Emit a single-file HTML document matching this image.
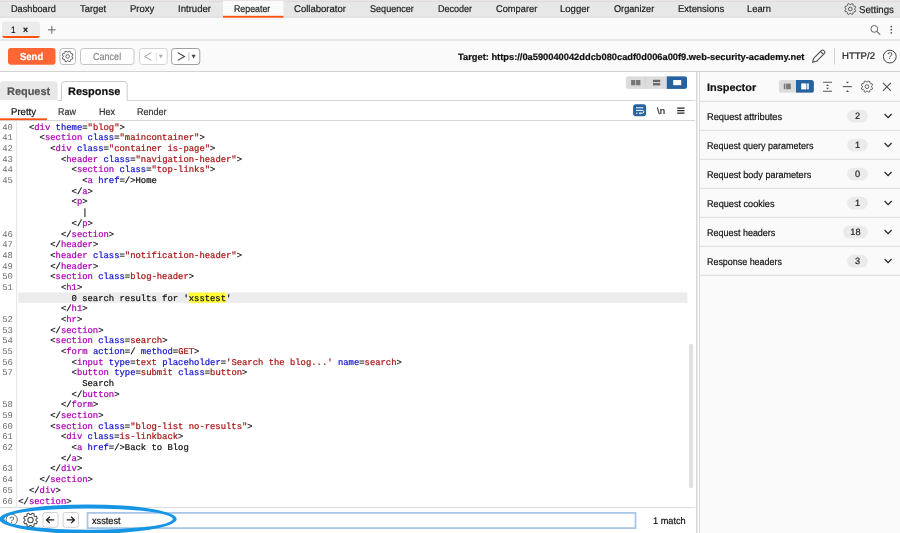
<!DOCTYPE html>
<html lang="en"><head><meta charset="utf-8"><title>Burp Suite Repeater</title>
<style>
html,body{margin:0;padding:0}
body{width:900px;height:533px;position:relative;overflow:hidden;background:#fafafa;font-family:"Liberation Sans",Arial,sans-serif;color:#1a1a1a;font-size:9.6px}
.abs{position:absolute}
svg{position:absolute;left:0;top:0;overflow:hidden}
.lb{-webkit-text-stroke:0.2px;position:absolute;line-height:1;white-space:nowrap;transform-origin:0 50%}
#fg{position:absolute;left:0;top:0;width:900px;height:533px;will-change:transform;text-rendering:geometricPrecision}
.row{position:absolute;left:0;width:688px;height:10.68px;line-height:10.68px;font-family:"Liberation Mono","DejaVu Sans Mono",monospace;font-size:8.88px;white-space:pre;color:#111;-webkit-text-stroke:0.22px}
.num{position:absolute;left:2.2px;top:0;color:#6e6e6e;-webkit-text-stroke:0}
.src{position:absolute;left:18.3px;top:0;height:10.68px}
.t{color:#ae00b2} .a{color:#1414cc} .v{color:#a61616} .x{color:#111}
.hl{color:#111}
.bd{position:absolute;width:30px;text-align:center;line-height:12.8px;height:12.8px;font-size:9.2px;color:#222;-webkit-text-stroke:0.2px}
.qm{position:absolute;width:14px;text-align:center;line-height:1;color:#444}
</style></head><body>
<div id="fg">
<svg width="900" height="533" viewBox="0 0 900 533">
<rect x="0.00" y="0.00" width="900.00" height="533.00" fill="#fafafa"/>
<rect x="0.00" y="0.00" width="900.00" height="17.50" fill="#e7e7e7"/>
<rect x="0.00" y="0.00" width="900.00" height="0.90" fill="#ece6e4"/>
<rect x="0.00" y="0.90" width="900.00" height="0.90" fill="#dadada"/>
<rect x="0.00" y="16.60" width="900.00" height="1.00" fill="#d8dcdc"/>
<rect x="223.00" y="1.00" width="60.50" height="16.80" fill="#fbfbfb"/>
<rect x="223.00" y="15.80" width="60.50" height="1.90" fill="#ff5210"/>
<g transform="translate(850.30 9.00) scale(0.9333)"><path d="M4.76 0.64 L5.83 1.40 L5.12 3.13 L3.82 2.91 L2.91 3.82 L3.13 5.12 L1.40 5.83 L0.64 4.76 L-0.64 4.76 L-1.40 5.83 L-3.13 5.12 L-2.91 3.82 L-3.82 2.91 L-5.12 3.13 L-5.83 1.40 L-4.76 0.64 L-4.76 -0.64 L-5.83 -1.40 L-5.12 -3.13 L-3.82 -2.91 L-2.91 -3.82 L-3.13 -5.12 L-1.40 -5.83 L-0.64 -4.76 L0.64 -4.76 L1.40 -5.83 L3.13 -5.12 L2.91 -3.82 L3.82 -2.91 L5.12 -3.13 L5.83 -1.40 L4.76 -0.64Z" fill="none" stroke="#555" stroke-width="1.02" stroke-linejoin="round"/><circle r="2.0" fill="none" stroke="#555" stroke-width="1.02"/></g>
<clipPath id="c1"><rect x="2" y="21.3" width="38" height="16.7" rx="3"/></clipPath>
<g clip-path="url(#c1)"><rect x="2" y="21.3" width="38" height="16.7" fill="#ebebeb"/><rect x="2" y="36" width="38" height="2" fill="#ff5210"/></g>
<path d="M51.85 26V33.7M48 29.85H55.7" fill="none" stroke="#666" stroke-width="1.0"/>
<circle cx="874.3" cy="28.9" r="3.4" fill="none" stroke="#666" stroke-width="1"/>
<path d="M876.7 31.4L880.2 34.7" fill="none" stroke="#666" stroke-width="1.1"/>
<circle cx="891.3" cy="26.6" r="0.9" fill="#555"/>
<circle cx="891.3" cy="29.7" r="0.9" fill="#555"/>
<circle cx="891.3" cy="32.8" r="0.9" fill="#555"/>
<rect x="0.00" y="39.10" width="900.00" height="1.80" fill="#e2e5e5"/>
<rect x="8.00" y="48.00" width="47.50" height="16.70" rx="3" fill="#ff6633"/>
<rect x="60.00" y="48.50" width="15.50" height="16.00" rx="2.8" fill="#fff" stroke="#bdbdbd" stroke-width="1"/>
<g transform="translate(67.60 56.40) scale(0.9167)"><path d="M4.76 0.64 L5.83 1.40 L5.12 3.13 L3.82 2.91 L2.91 3.82 L3.13 5.12 L1.40 5.83 L0.64 4.76 L-0.64 4.76 L-1.40 5.83 L-3.13 5.12 L-2.91 3.82 L-3.82 2.91 L-5.12 3.13 L-5.83 1.40 L-4.76 0.64 L-4.76 -0.64 L-5.83 -1.40 L-5.12 -3.13 L-3.82 -2.91 L-2.91 -3.82 L-3.13 -5.12 L-1.40 -5.83 L-0.64 -4.76 L0.64 -4.76 L1.40 -5.83 L3.13 -5.12 L2.91 -3.82 L3.82 -2.91 L5.12 -3.13 L5.83 -1.40 L4.76 -0.64Z" fill="none" stroke="#555" stroke-width="0.98" stroke-linejoin="round"/><circle r="2.0" fill="none" stroke="#555" stroke-width="0.98"/></g>
<rect x="80.50" y="48.50" width="53.50" height="16.00" rx="2.8" fill="#fff" stroke="#c6c6c6" stroke-width="1"/>
<rect x="139.50" y="48.50" width="27.70" height="16.00" rx="2.8" fill="#fff" stroke="#d4d4d4" stroke-width="1"/>
<path d="M12.3 4.6 L5.6 8.5 L12.3 12.4" fill="none" stroke="#9a9a9a" stroke-width="0.95" transform="translate(139.00 48.00)"/>
<path d="M17.3 4.3V12.8" fill="none" stroke="#d0d0d0" stroke-width="0.7" transform="translate(139.00 48.00)"/>
<path d="M19.8 6.8 H23.8 L21.8 10.3Z" fill="#aaa" transform="translate(139.00 48.00)"/>
<rect x="171.60" y="48.50" width="28.20" height="16.00" rx="2.8" fill="#fff" stroke="#a0a0a0" stroke-width="1"/>
<path d="M6.4 4.6 L13.2 8.5 L6.4 12.4" fill="none" stroke="#3a3a3a" stroke-width="1.05" transform="translate(171.30 48.00)"/>
<path d="M17.6 4.3V12.8" fill="none" stroke="#999" stroke-width="0.7" transform="translate(171.30 48.00)"/>
<path d="M20.2 6.8 H24.4 L22.3 10.4Z" fill="#444" transform="translate(171.30 48.00)"/>
<path d="M1.6 14.3 L2.6 10.4 L10.6 2.4 Q11.6 1.4 12.6 2.4 L13.5 3.3 Q14.5 4.3 13.5 5.3 L5.5 13.3 Z M9.6 3.6 L12.4 6.4" fill="none" stroke="#4a4a4a" stroke-width="1.05" transform="translate(811.00 48.00)" stroke-linejoin="round"/>
<rect x="834.00" y="48.00" width="1.00" height="16.50" fill="#d0d0d0"/>
<circle cx="889.8" cy="56.6" r="6.4" fill="none" stroke="#444" stroke-width="1"/>
<rect x="0.00" y="71.00" width="900.00" height="1.00" fill="#d5d2d0"/>
<rect x="0.00" y="72.00" width="696.00" height="461.00" fill="#fff"/>
<path d="M0 100V84.3Q0 81.3 3 81.3H54.6Q57.6 81.3 57.6 84.3V100Z" fill="#e8e8e8"/>
<rect x="57.60" y="100.00" width="637.40" height="1.00" fill="#d6d3d1"/>
<path d="M61.5 100.5V84.5Q61.5 81.5 64.5 81.5H124.2Q127.2 81.5 127.2 84.5V100.5" fill="#fff" stroke="#cdcbca" stroke-width="1"/>
<rect x="62.00" y="99.50" width="64.70" height="2.00" fill="#fff"/>
<clipPath id="c2"><rect x="625.8" y="76.2" width="61.3" height="12.7" rx="2.6"/></clipPath>
<g clip-path="url(#c2)"><rect x="625.8" y="76.2" width="61.3" height="12.7" fill="#dcdcdc"/><rect x="645" y="76.2" width="0.7" height="12.7" fill="#cfcfcf"/><rect x="666.8" y="76.2" width="20.4" height="12.7" fill="#25629f"/></g>
<rect x="631.10" y="80.00" width="4.30" height="5.30" fill="#777"/>
<rect x="636.10" y="80.00" width="4.30" height="5.30" fill="#777"/>
<rect x="653.00" y="79.80" width="7.20" height="2.30" fill="#666"/>
<rect x="653.00" y="83.10" width="7.20" height="2.30" fill="#666"/>
<rect x="673.20" y="80.00" width="8.00" height="5.20" fill="#fff"/>
<rect x="0.00" y="120.00" width="695.00" height="1.00" fill="#d9d7d6"/>
<rect x="0.00" y="118.30" width="47.00" height="1.80" fill="#ff5210"/>
<rect x="633.10" y="104.20" width="13.00" height="12.10" rx="2.7" fill="#27649f"/>
<path d="M3 3.6H10.3M3 6.2H9.2Q10.8 6.2 10.8 7.6Q10.8 9 9.2 9H6.8M3 9H4.6" fill="none" stroke="#fff" stroke-width="1" transform="translate(633.00 104.20)"/>
<path d="M7.4 7.6 L5.8 9 L7.4 10.4Z" fill="#fff" transform="translate(633.00 104.20)"/>
<path d="M0.2 1.1H7.5M0.2 3.6H7.5M0.2 6.1H7.5" fill="none" stroke="#222" stroke-width="1.1" transform="translate(677.00 107.00)"/>
<rect x="16.20" y="121.00" width="1.00" height="386.00" fill="#e4e4e4"/>
<rect x="18.30" y="292.50" width="669.00" height="10.30" fill="#ececec"/>
<rect x="188.80" y="292.50" width="37.40" height="10.30" fill="#ffff38"/>
<rect x="689.00" y="343.70" width="4.20" height="144.70" rx="2.1" fill="#e1e1e1"/>
<rect x="0.00" y="507.00" width="695.00" height="1.00" fill="#dcdcdc"/>
<circle cx="11.7" cy="519.7" r="5.6" fill="none" stroke="#555" stroke-width="0.9"/>
<g transform="translate(30.50 520.00) scale(1.1667)"><path d="M4.76 0.64 L5.83 1.40 L5.12 3.13 L3.82 2.91 L2.91 3.82 L3.13 5.12 L1.40 5.83 L0.64 4.76 L-0.64 4.76 L-1.40 5.83 L-3.13 5.12 L-2.91 3.82 L-3.82 2.91 L-5.12 3.13 L-5.83 1.40 L-4.76 0.64 L-4.76 -0.64 L-5.83 -1.40 L-5.12 -3.13 L-3.82 -2.91 L-2.91 -3.82 L-3.13 -5.12 L-1.40 -5.83 L-0.64 -4.76 L0.64 -4.76 L1.40 -5.83 L3.13 -5.12 L2.91 -3.82 L3.82 -2.91 L5.12 -3.13 L5.83 -1.40 L4.76 -0.64Z" fill="none" stroke="#4a4a4a" stroke-width="0.90" stroke-linejoin="round"/><circle r="2.3" fill="none" stroke="#4a4a4a" stroke-width="0.90"/></g>
<rect x="43.00" y="512.50" width="15.10" height="14.80" rx="2.4" fill="#fff" stroke="#d6d0ce" stroke-width="1"/>
<path d="M11.7 7.9H4.1M7.3 4.7 L4 7.9 L7.3 11.1" fill="none" stroke="#1a1a1a" stroke-width="1.25" transform="translate(42.50 512.00)"/>
<rect x="63.10" y="512.50" width="15.30" height="14.80" rx="2.4" fill="#fff" stroke="#d6d0ce" stroke-width="1"/>
<path d="M4.1 7.9H11.7M8.5 4.7 L11.8 7.9 L8.5 11.1" fill="none" stroke="#1a1a1a" stroke-width="1.25" transform="translate(62.60 512.00)"/>
<rect x="87.50" y="512.90" width="548.00" height="15.20" fill="#fff" stroke="#aac5e8" stroke-width="1.8"/>
<rect x="696.00" y="72.00" width="4.00" height="461.00" fill="#fcfcfc"/>
<rect x="696.10" y="72.00" width="1.20" height="461.00" fill="#d6d1d0"/>
<rect x="699.10" y="72.00" width="0.90" height="461.00" fill="#d9d5d4"/>
<rect x="700.00" y="72.00" width="200.00" height="461.00" fill="#fafafa"/>
<clipPath id="c3"><rect x="778.8" y="80" width="35" height="12.8" rx="2.6"/></clipPath>
<g clip-path="url(#c3)"><rect x="778.8" y="80" width="35" height="12.8" fill="#dcdcdc"/><rect x="796" y="80" width="18" height="12.8" fill="#25629f"/></g>
<rect x="783.80" y="83.60" width="1.60" height="5.60" fill="#7a7a7a"/>
<rect x="786.10" y="83.60" width="4.70" height="5.60" fill="#7a7a7a"/>
<rect x="801.20" y="83.40" width="5.20" height="6.00" fill="#fff"/>
<rect x="807.20" y="83.40" width="1.60" height="6.00" fill="#fff"/>
<path d="M1 2.3H10M1 11.3H10" fill="none" stroke="#555" stroke-width="1.05" transform="translate(822.00 80.00)"/>
<path d="M4 5.9H7L5.5 4.2Z M4 7.8H7L5.5 9.5Z" fill="#555" transform="translate(822.00 80.00)"/>
<path d="M0.8 6.6H9.9" fill="none" stroke="#555" stroke-width="1.1" transform="translate(842.00 80.00)"/>
<path d="M4 1.8H7L5.5 3.6Z M4 11.9H7L5.5 10.1Z" fill="#555" transform="translate(842.00 80.00)"/>
<g transform="translate(867.00 86.60) scale(0.9667)"><path d="M4.76 0.64 L5.83 1.40 L5.12 3.13 L3.82 2.91 L2.91 3.82 L3.13 5.12 L1.40 5.83 L0.64 4.76 L-0.64 4.76 L-1.40 5.83 L-3.13 5.12 L-2.91 3.82 L-3.82 2.91 L-5.12 3.13 L-5.83 1.40 L-4.76 0.64 L-4.76 -0.64 L-5.83 -1.40 L-5.12 -3.13 L-3.82 -2.91 L-2.91 -3.82 L-3.13 -5.12 L-1.40 -5.83 L-0.64 -4.76 L0.64 -4.76 L1.40 -5.83 L3.13 -5.12 L2.91 -3.82 L3.82 -2.91 L5.12 -3.13 L5.83 -1.40 L4.76 -0.64Z" fill="none" stroke="#555" stroke-width="0.93" stroke-linejoin="round"/><circle r="2.0" fill="none" stroke="#555" stroke-width="0.93"/></g>
<path d="M0.9 0.8 L8.9 8.9 M8.9 0.8 L0.9 8.9" fill="none" stroke="#555" stroke-width="1.15" transform="translate(882.00 82.00)"/>
<rect x="700.00" y="100.80" width="200.00" height="1.00" fill="#dcdad9"/>
<rect x="700.00" y="129.80" width="200.00" height="1.00" fill="#dedcdb"/>
<rect x="847.20" y="109.70" width="20.60" height="12.80" rx="6.4" fill="#ebebeb"/>
<path d="M1 1.3 L4.5 5 L8 1.3" fill="none" stroke="#222" stroke-width="1.15" transform="translate(883.60 112.70)"/>
<rect x="700.00" y="158.80" width="200.00" height="1.00" fill="#dedcdb"/>
<rect x="847.20" y="138.70" width="20.60" height="12.80" rx="6.4" fill="#ebebeb"/>
<path d="M1 1.3 L4.5 5 L8 1.3" fill="none" stroke="#222" stroke-width="1.15" transform="translate(883.60 141.70)"/>
<rect x="700.00" y="187.80" width="200.00" height="1.00" fill="#dedcdb"/>
<rect x="847.20" y="167.70" width="20.60" height="12.80" rx="6.4" fill="#ebebeb"/>
<path d="M1 1.3 L4.5 5 L8 1.3" fill="none" stroke="#222" stroke-width="1.15" transform="translate(883.60 170.70)"/>
<rect x="700.00" y="216.80" width="200.00" height="1.00" fill="#dedcdb"/>
<rect x="847.20" y="196.70" width="20.60" height="12.80" rx="6.4" fill="#ebebeb"/>
<path d="M1 1.3 L4.5 5 L8 1.3" fill="none" stroke="#222" stroke-width="1.15" transform="translate(883.60 199.70)"/>
<rect x="700.00" y="245.80" width="200.00" height="1.00" fill="#dedcdb"/>
<rect x="843.00" y="225.70" width="24.80" height="12.80" rx="6.4" fill="#ebebeb"/>
<path d="M1 1.3 L4.5 5 L8 1.3" fill="none" stroke="#222" stroke-width="1.15" transform="translate(883.60 228.70)"/>
<rect x="700.00" y="274.80" width="200.00" height="1.00" fill="#dedcdb"/>
<rect x="847.20" y="254.70" width="20.60" height="12.80" rx="6.4" fill="#ebebeb"/>
<path d="M1 1.3 L4.5 5 L8 1.3" fill="none" stroke="#222" stroke-width="1.15" transform="translate(883.60 257.70)"/>
</svg>

<span class="lb" id="tab0" style="left:10.80px;top:4.70px;font-size:9.8px;color:#1c1c1c;transform:scaleX(0.9355);">Dashboard</span>
<span class="lb" id="tab1" style="left:79.76px;top:4.70px;font-size:9.8px;color:#1c1c1c;transform:scaleX(0.9630);">Target</span>
<span class="lb" id="tab2" style="left:129.77px;top:4.70px;font-size:9.8px;color:#1c1c1c;transform:scaleX(0.9691);">Proxy</span>
<span class="lb" id="tab3" style="left:177.52px;top:4.70px;font-size:9.8px;color:#1c1c1c;transform:scaleX(0.9771);">Intruder</span>
<span class="lb" id="tab4" style="left:234.33px;top:4.70px;font-size:9.8px;color:#1c1c1c;transform:scaleX(0.8987);">Repeater</span>
<span class="lb" id="tab5" style="left:293.81px;top:4.70px;font-size:9.8px;color:#1c1c1c;transform:scaleX(0.9744);">Collaborator</span>
<span class="lb" id="tab6" style="left:370.24px;top:4.70px;font-size:9.8px;color:#1c1c1c;transform:scaleX(0.9262);">Sequencer</span>
<span class="lb" id="tab7" style="left:437.61px;top:4.70px;font-size:9.8px;color:#1c1c1c;transform:scaleX(0.9214);">Decoder</span>
<span class="lb" id="tab8" style="left:495.53px;top:4.70px;font-size:9.8px;color:#1c1c1c;transform:scaleX(0.9465);">Comparer</span>
<span class="lb" id="tab9" style="left:560.27px;top:4.70px;font-size:9.8px;color:#1c1c1c;transform:scaleX(0.9748);">Logger</span>
<span class="lb" id="tab10" style="left:613.83px;top:4.70px;font-size:9.8px;color:#1c1c1c;transform:scaleX(0.9341);">Organizer</span>
<span class="lb" id="tab11" style="left:677.58px;top:4.70px;font-size:9.8px;color:#1c1c1c;transform:scaleX(0.9626);">Extensions</span>
<span class="lb" id="tab12" style="left:746.58px;top:4.70px;font-size:9.8px;color:#1c1c1c;transform:scaleX(0.9558);">Learn</span>
<span class="lb" id="settings" style="left:859.22px;top:5.94px;font-size:10.0px;color:#1c1c1c;transform:scaleX(0.9645);">Settings</span>
<span class="lb" id="one" style="left:11.34px;top:25.83px;font-size:9.3px;color:#111;transform:scaleX(0.8750);">1</span>
<span class="lb" id="xclose" style="left:23.36px;top:26.47px;font-size:9.6px;color:#111;font-weight:bold;transform:scaleX(0.8842);">×</span>
<span class="lb" id="sendt" style="left:20.27px;top:53.15px;font-size:10.1px;color:#fff;font-weight:bold;transform:scaleX(0.9389);">Send</span>
<span class="lb" id="cancel" style="left:93.25px;top:53.15px;font-size:10.1px;color:#8a8a8a;transform:scaleX(0.8959);">Cancel</span>
<span class="lb" id="tgt" style="left:457.50px;top:53.07px;font-size:9.25px;color:#111;font-weight:bold;transform:scaleX(1.0052);">Target: https://0a590040042ddcb080cadf0d006a00f9.web-security-academy.net</span>
<span class="lb" id="http2" style="left:841.75px;top:52.17px;font-size:9.6px;color:#1c1c1c;transform:scaleX(0.9984);">HTTP/2</span>
<span class="qm" style="left:882.8px;top:52.2px;font-size:9.6px">?</span>
<span class="lb" id="req" style="left:7.06px;top:86.69px;font-size:11px;color:#555;font-weight:bold;transform:scaleX(0.9929);">Request</span>
<span class="lb" id="res" style="left:67.95px;top:86.69px;font-size:11px;color:#111;font-weight:bold;transform:scaleX(0.9961);">Response</span>
<span class="lb" id="pretty" style="left:10.57px;top:107.70px;font-size:9.8px;color:#111;transform:scaleX(0.9778);">Pretty</span>
<span class="lb" id="raw" style="left:58.02px;top:107.70px;font-size:9.8px;color:#333;transform:scaleX(0.9120);">Raw</span>
<span class="lb" id="hex" style="left:98.81px;top:107.70px;font-size:9.8px;color:#333;transform:scaleX(0.9212);">Hex</span>
<span class="lb" id="render" style="left:137.31px;top:107.70px;font-size:9.8px;color:#333;transform:scaleX(0.9184);">Render</span>
<span class="lb" id="nl" style="left:656.80px;top:106.97px;font-size:8.9px;color:#222;transform:scaleX(1.0815);">\n</span>

<div class="row" style="top:122.70px"><span class="num">40</span><span class="src">  &lt;<span class="t">div</span> <span class="a">theme</span>=<span class="v">"blog"</span>&gt;</span></div>
<div class="row" style="top:133.38px"><span class="num">41</span><span class="src">    &lt;<span class="t">section</span> <span class="a">class</span>=<span class="v">"maincontainer"</span>&gt;</span></div>
<div class="row" style="top:144.06px"><span class="num">42</span><span class="src">      &lt;<span class="t">div</span> <span class="a">class</span>=<span class="v">"container is-page"</span>&gt;</span></div>
<div class="row" style="top:154.74px"><span class="num">43</span><span class="src">        &lt;<span class="t">header</span> <span class="a">class</span>=<span class="v">"navigation-header"</span>&gt;</span></div>
<div class="row" style="top:165.42px"><span class="num">44</span><span class="src">          &lt;<span class="t">section</span> <span class="a">class</span>=<span class="v">"top-links"</span>&gt;</span></div>
<div class="row" style="top:176.10px"><span class="num">45</span><span class="src">            &lt;<span class="t">a</span> <span class="a">href</span>=/&gt;<span class="x">Home</span></span></div>
<div class="row" style="top:186.78px"><span class="num"></span><span class="src">          &lt;/<span class="t">a</span>&gt;</span></div>
<div class="row" style="top:197.46px"><span class="num"></span><span class="src">          &lt;<span class="t">p</span>&gt;</span></div>
<div class="row" style="top:208.14px"><span class="num"></span><span class="src">            <span class="x">|</span></span></div>
<div class="row" style="top:218.82px"><span class="num"></span><span class="src">          &lt;/<span class="t">p</span>&gt;</span></div>
<div class="row" style="top:229.50px"><span class="num">46</span><span class="src">        &lt;/<span class="t">section</span>&gt;</span></div>
<div class="row" style="top:240.18px"><span class="num">47</span><span class="src">      &lt;/<span class="t">header</span>&gt;</span></div>
<div class="row" style="top:250.86px"><span class="num">48</span><span class="src">      &lt;<span class="t">header</span> <span class="a">class</span>=<span class="v">"notification-header"</span>&gt;</span></div>
<div class="row" style="top:261.54px"><span class="num">49</span><span class="src">      &lt;/<span class="t">header</span>&gt;</span></div>
<div class="row" style="top:272.22px"><span class="num">50</span><span class="src">      &lt;<span class="t">section</span> <span class="a">class</span>=<span class="v">blog-header</span>&gt;</span></div>
<div class="row" style="top:282.90px"><span class="num">51</span><span class="src">        &lt;<span class="t">h1</span>&gt;</span></div>
<div class="row" style="top:293.58px"><span class="num"></span><span class="src">          <span class="x">0 search results for '</span><span class="hl">xsstest</span><span class="x">'</span></span></div>
<div class="row" style="top:304.26px"><span class="num"></span><span class="src">        &lt;/<span class="t">h1</span>&gt;</span></div>
<div class="row" style="top:314.94px"><span class="num">52</span><span class="src">        &lt;<span class="t">hr</span>&gt;</span></div>
<div class="row" style="top:325.62px"><span class="num">53</span><span class="src">      &lt;/<span class="t">section</span>&gt;</span></div>
<div class="row" style="top:336.30px"><span class="num">54</span><span class="src">      &lt;<span class="t">section</span> <span class="a">class</span>=<span class="v">search</span>&gt;</span></div>
<div class="row" style="top:346.98px"><span class="num">55</span><span class="src">        &lt;<span class="t">form</span> <span class="a">action</span>=/ <span class="a">method</span>=<span class="v">GET</span>&gt;</span></div>
<div class="row" style="top:357.66px"><span class="num">56</span><span class="src">          &lt;<span class="t">input</span> <span class="a">type</span>=<span class="v">text</span> <span class="a">placeholder</span>=<span class="v">'Search the blog...'</span> <span class="a">name</span>=<span class="v">search</span>&gt;</span></div>
<div class="row" style="top:368.34px"><span class="num">57</span><span class="src">          &lt;<span class="t">button</span> <span class="a">type</span>=<span class="v">submit</span> <span class="a">class</span>=<span class="v">button</span>&gt;</span></div>
<div class="row" style="top:379.02px"><span class="num"></span><span class="src">            <span class="x">Search</span></span></div>
<div class="row" style="top:389.70px"><span class="num"></span><span class="src">          &lt;/<span class="t">button</span>&gt;</span></div>
<div class="row" style="top:400.38px"><span class="num">58</span><span class="src">        &lt;/<span class="t">form</span>&gt;</span></div>
<div class="row" style="top:411.06px"><span class="num">59</span><span class="src">      &lt;/<span class="t">section</span>&gt;</span></div>
<div class="row" style="top:421.74px"><span class="num">60</span><span class="src">      &lt;<span class="t">section</span> <span class="a">class</span>=<span class="v">"blog-list no-results"</span>&gt;</span></div>
<div class="row" style="top:432.42px"><span class="num">61</span><span class="src">        &lt;<span class="t">div</span> <span class="a">class</span>=<span class="v">is-linkback</span>&gt;</span></div>
<div class="row" style="top:443.10px"><span class="num">62</span><span class="src">          &lt;<span class="t">a</span> <span class="a">href</span>=/&gt;<span class="x">Back to Blog</span></span></div>
<div class="row" style="top:453.78px"><span class="num"></span><span class="src">        &lt;/<span class="t">a</span>&gt;</span></div>
<div class="row" style="top:464.46px"><span class="num">63</span><span class="src">      &lt;/<span class="t">div</span>&gt;</span></div>
<div class="row" style="top:475.14px"><span class="num">64</span><span class="src">    &lt;/<span class="t">section</span>&gt;</span></div>
<div class="row" style="top:485.82px"><span class="num">65</span><span class="src">  &lt;/<span class="t">div</span>&gt;</span></div>
<div class="row" style="top:496.50px"><span class="num">66</span><span class="src">&lt;/<span class="t">section</span>&gt;</span></div>

<span class="qm" style="left:4.7px;top:515.5px;font-size:9.2px;color:#555">?</span>
<span class="lb" id="q" style="left:91.77px;top:516.80px;font-size:9.8px;color:#111;transform:scaleX(0.9355);">xsstest</span>
<span class="lb" id="match" style="left:652.88px;top:516.57px;font-size:9.6px;color:#111;transform:scaleX(0.9588);">1 match</span>
<span class="lb" id="insp_t" style="left:706.73px;top:82.54px;font-size:10.7px;color:#111;font-weight:bold;transform:scaleX(1.0222);">Inspector</span>
<span class="lb" id="il0" style="left:706.79px;top:112.70px;font-size:9.8px;color:#111;transform:scaleX(0.9452);">Request attributes</span>
<span class="bd" style="left:842.50px;top:110.30px">2</span>
<span class="lb" id="il1" style="left:706.81px;top:141.70px;font-size:9.8px;color:#111;transform:scaleX(0.9174);">Request query parameters</span>
<span class="bd" style="left:842.50px;top:139.30px">1</span>
<span class="lb" id="il2" style="left:706.81px;top:170.70px;font-size:9.8px;color:#111;transform:scaleX(0.9244);">Request body parameters</span>
<span class="bd" style="left:842.50px;top:168.30px">0</span>
<span class="lb" id="il3" style="left:706.80px;top:199.70px;font-size:9.8px;color:#111;transform:scaleX(0.9319);">Request cookies</span>
<span class="bd" style="left:842.50px;top:197.30px">1</span>
<span class="lb" id="il4" style="left:706.81px;top:228.70px;font-size:9.8px;color:#111;transform:scaleX(0.9156);">Request headers</span>
<span class="bd" style="left:840.40px;top:226.30px">18</span>
<span class="lb" id="il5" style="left:706.82px;top:257.70px;font-size:9.8px;color:#111;transform:scaleX(0.9108);">Response headers</span>
<span class="bd" style="left:842.50px;top:255.30px">3</span>

<svg width="900" height="533" viewBox="0 0 900 533"><path d="M-0.70 519.10A88.7 14.7 0 1 0 176.70 519.10A88.7 14.7 0 1 0 -0.70 519.10ZM4.20 519.10A84.3 10.6 0 1 0 172.80 519.10A84.3 10.6 0 1 0 4.20 519.10Z" fill="#1795e5" fill-rule="evenodd"/></svg>
</div>
</body></html>
